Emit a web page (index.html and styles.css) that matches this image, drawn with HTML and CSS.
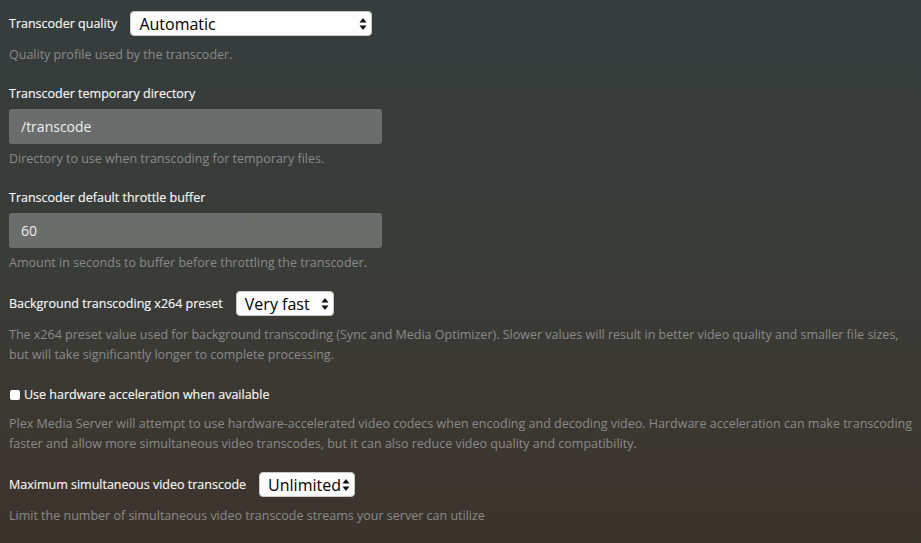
FILE: index.html
```html
<!DOCTYPE html>
<html>
<head>
<meta charset="utf-8">
<link rel="stylesheet" href="styles.css">
</head>
<body>
<div class="page">
  <div class="group">
    <div class="row">
      <label class="label">Transcoder quality</label>
      <div class="select select-quality"><span>Automatic</span>
        <svg class="arrows" width="8" height="14" viewBox="0 0 8 14"><path d="M4 1 L7.5 5.5 H0.5 Z M4 13 L7.5 8.5 H0.5 Z" fill="#111"/></svg>
      </div>
    </div>
    <p class="desc">Quality profile used by the transcoder.</p>
  </div>

  <div class="group">
    <label class="label block">Transcoder temporary directory</label>
    <div class="input">/transcode</div>
    <p class="desc after-input">Directory to use when transcoding for temporary files.</p>
  </div>

  <div class="group group-short">
    <label class="label block">Transcoder default throttle buffer</label>
    <div class="input">60</div>
    <p class="desc after-input">Amount in seconds to buffer before throttling the transcoder.</p>
  </div>

  <div class="group">
    <div class="row">
      <label class="label">Background transcoding x264 preset</label>
      <div class="select select-preset"><span>Very fast</span>
        <svg class="arrows" width="8" height="14" viewBox="0 0 8 14"><path d="M4 1 L7.5 5.5 H0.5 Z M4 13 L7.5 8.5 H0.5 Z" fill="#111"/></svg>
      </div>
    </div>
    <p class="desc">The x264 preset value used for background transcoding (Sync and Media Optimizer). Slower values will result in better video quality and smaller file sizes, but will take significantly longer to complete processing.</p>
  </div>

  <div class="group group-check">
    <div class="check-row">
      <span class="checkbox"></span>
      <label class="label">Use hardware acceleration when available</label>
    </div>
    <p class="desc after-check">Plex Media Server will attempt to use hardware-accelerated video codecs when encoding and decoding video. Hardware acceleration can make transcoding faster and allow more simultaneous video transcodes, but it can also reduce video quality and compatibility.</p>
  </div>

  <div class="group">
    <div class="row">
      <label class="label">Maximum simultaneous video transcode</label>
      <div class="select select-max"><span>Unlimited</span>
        <svg class="arrows" width="8" height="14" viewBox="0 0 8 14"><path d="M4 1 L7.5 5.5 H0.5 Z M4 13 L7.5 8.5 H0.5 Z" fill="#111"/></svg>
      </div>
    </div>
    <p class="desc">Limit the number of simultaneous video transcode streams your server can utilize</p>
  </div>
</div>
</body>
</html>
```

FILE: styles.css
```css
html, body {
  margin: 0;
  padding: 0;
  height: 100%;
}
body {
  background: linear-gradient(180deg, #353d3d 0%, #3a3c38 50%, #3c342c 100%);
  font-family: "Open Sans", "Liberation Sans", sans-serif;
  font-size: 12.5px;
  color: #f2f2f2;
  overflow: hidden;
}
.page {
  padding: 11px 0 0 9px;
}
.group {
  margin-bottom: 19px;
}
.group-short {
  margin-bottom: 18px;
}
.group-check {
  margin-bottom: 18px;
}
.row {
  display: flex;
  align-items: center;
  height: 25px;
}
.label {
  color: #f6f6f6;
  font-size: 12.5px;
  line-height: 20px;
  -webkit-text-stroke: 0.15px #f6f6f6;
}
.label.block {
  display: block;
  margin-bottom: 5px;
}
.row .label {
  margin-right: 13px;
}
.select {
  display: flex;
  align-items: center;
  justify-content: space-between;
  box-sizing: border-box;
  height: 25px;
  background: #fdfdfd;
  border-radius: 4px;
  border: 1px solid #c8c8c8;
  color: #000;
  font-size: 16px;
  padding: 0 4px 0 8px;
}
.select-quality { width: 242px; }
.select-preset { width: 98px; }
.select-max { width: 96px; }
.arrows { flex: none; }
.input {
  box-sizing: border-box;
  width: 373px;
  height: 35px;
  background: rgba(255, 255, 255, 0.25);
  border-radius: 3px;
  color: #eeeeee;
  font-size: 14px;
  line-height: 35px;
  padding-left: 12px;
}
.desc {
  margin: 9px 0 0 0;
  color: #8a8a88;
  font-size: 12.5px;
  line-height: 20px;
}
.desc.after-input {
  margin-top: 5px;
}
.desc.after-check {
  margin-top: 9px;
}
.check-row {
  display: flex;
  align-items: center;
  height: 20px;
  padding-top: 1px;
}
.checkbox {
  width: 10px;
  height: 10px;
  background: #fff;
  border-radius: 2px;
  margin: 0 4px 0 1px;
}
```
